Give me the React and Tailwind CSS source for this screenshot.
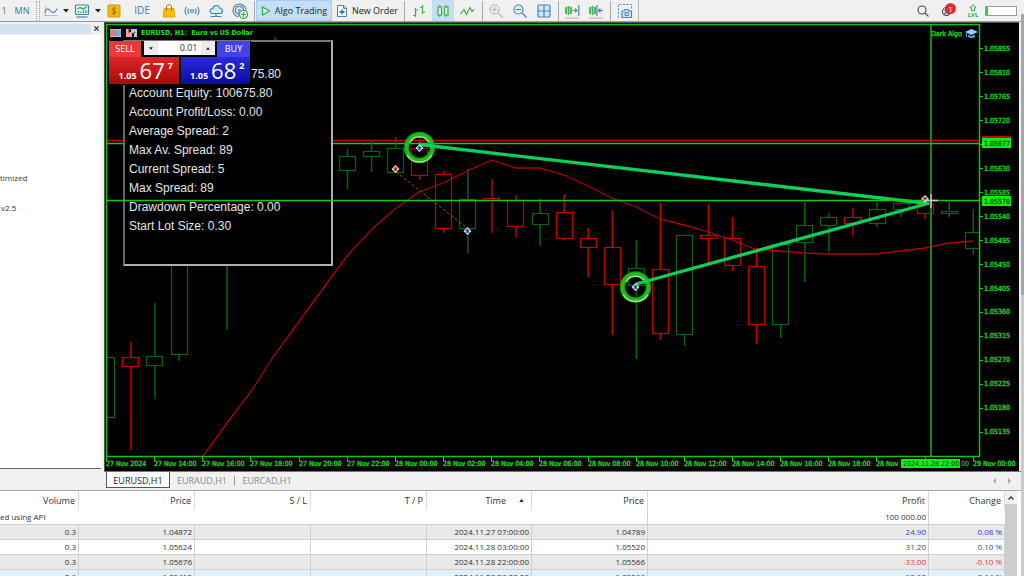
// src/App.jsx
import React from 'react';

const STEP = 24.07;
const FIRST_X = 106.8;

// [slot, direction, high, bodyTop, bodyBottom, low]
const candles = [
    [0, 'up', 357, 357, 417, 417],
    [1, 'down', 342, 357, 366, 450],
    [2, 'up', 303, 356, 365, 399],
    [3, 'up', 240, 240, 354, 361],
    [5, 'up', 200, 200, 210, 330],
    [7, 'up', 37, 50, 60, 70],
    [10, 'up', 149, 156, 170, 189],
    [11, 'up', 140, 151, 156, 172],
    [12, 'up', 137, 148, 172, 173],
    [13, 'down', 137, 148, 175, 180],
    [14, 'down', 171, 174, 228, 233],
    [15, 'up', 169, 199, 228, 253],
    [16, 'down', 179, 198, 200, 233],
    [17, 'down', 195, 200, 226, 238],
    [18, 'up', 199, 213, 224, 246],
    [19, 'down', 194, 212, 238, 240],
    [20, 'down', 228, 238, 247, 277],
    [21, 'down', 210, 247, 284, 335],
    [22, 'up', 240, 268, 285, 359],
    [23, 'down', 203, 269, 333, 340],
    [24, 'up', 235, 235, 334, 346],
    [25, 'down', 204, 235, 238, 263],
    [26, 'down', 217, 238, 265, 271],
    [27, 'down', 251, 266, 324, 344],
    [28, 'up', 241, 244, 324, 338],
    [29, 'up', 202, 225, 242, 282],
    [30, 'up', 213, 217, 225, 252],
    [31, 'down', 208, 217, 223, 236],
    [32, 'up', 202, 209, 223, 227],
    [33, 'up', 201, 203, 209, 217],
    [34, 'down', 200, 204, 213, 219],
    [35, 'up', 202, 211, 213, 217],
    [36, 'up', 209, 232, 248, 255],
];

const movingAverage =
    '203,456 233,415 252,390 273,357 300,320 330,279 347,256 371,230 395,209 419,192 443,183 467,171 492,160 516,168 540,168 564,175 588,186 612,198 636,207 660,219 684,225 708,232 732,240 755,249 780,251 804,253 828,254 876,254 900,251 925,248 949,243 973,241';

// the fifth level sits under the bid price tag
const priceLabels = [
    '1.05855', '1.05810', '1.05765', '1.05720', '', '1.05630', '1.05585', '1.05540', '1.05495',
    '1.05450', '1.05405', '1.05360', '1.05315', '1.05270', '1.05225', '1.05180', '1.05135',
];

// the crosshair time tag covers the 20:00 / 22:00 labels
const timeLabels = [
    '27 Nov 2024', '27 Nov 14:00', '27 Nov 16:00', '27 Nov 18:00', '27 Nov 20:00', '27 Nov 22:00',
    '28 Nov 00:00', '28 Nov 02:00', '28 Nov 04:00', '28 Nov 06:00', '28 Nov 08:00', '28 Nov 10:00',
    '28 Nov 12:00', '28 Nov 14:00', '28 Nov 16:00', '28 Nov 18:00', '28 Nov', '',
    '29 Nov 00:00',
];

const stats = [
    'Account Equity: 100675.80',
    'Account Profit/Loss: 0.00',
    'Average Spread: 2',
    'Max Av. Spread: 89',
    'Current Spread: 5',
    'Max Spread: 89',
    'Drawdown Percentage: 0.00',
    'Start Lot Size: 0.30',
];

const deals = [
    { volume: '0.3', open: '1.04872', time: '2024.11.27 07:00:00', close: '1.04789', profit: '24.90', change: '0.08 %', row: 'bg-[#e9e9e9]' },
    { volume: '0.3', open: '1.05624', time: '2024.11.28 03:00:00', close: '1.05520', profit: '31.20', change: '0.10 %', row: 'bg-white' },
    { volume: '0.3', open: '1.05676', time: '2024.11.28 22:00:00', close: '1.05566', profit: '-33.00', change: '-0.10 %', row: 'bg-[#e9e9e9]' },
    { volume: '0.6', open: '1.05415', time: '2024.11.28 23:00:00', close: '1.05566', profit: '90.60', change: '0.14 %', row: 'bg-[#e0f0fc]' },
];

const Tool = ({ label, className = 'w-6', children }) => (
    <button type="button" aria-label={label} className={`flex h-[21px] shrink-0 items-center justify-center ${className}`}>
        {children}
    </button>
);

const Separator = () => (
    <span className="flex w-1 shrink-0 justify-center">
        <span className="h-5 w-px bg-[#a8a8a8]" />
    </span>
);

const Caret = () => (
    <svg viewBox="0 0 6 4" className="h-1 w-[6px]">
        <path d="M0 0h6L3 3.5z" fill="#222" />
    </svg>
);

const Icon = ({ children, stroke = '#4a83b8' }) => (
    <svg viewBox="0 0 16 16" className="size-4" fill="none" stroke={stroke} strokeWidth="1.2">
        {children}
    </svg>
);

const Toolbar = () => (
    <header className="flex h-[22px] shrink-0 items-center border-b border-[#9a9a9a] bg-[#f0f0f0] text-[9px] text-[#1e1e1e]">
        <Tool label="Weekly" className="w-2 text-[#3d78ad]">1</Tool>
        <Tool label="Monthly" className="w-7 text-[#3d78ad]">MN</Tool>
        <span className="h-5 w-1 shrink-0 border-x border-dotted border-[#a0a0a0]" />
        <Tool label="Chart type" className="w-[22px]">
            <Icon>
                <path d="M2.500 3v10M1 12.500h14" stroke="#b5bcc4" strokeWidth="1" />
                <path d="M1.500 9.500c2.500-5 4-4 6-1.500s4 2 7-2.500" />
            </Icon>
        </Tool>
        <Tool label="Chart type menu" className="w-2"><Caret /></Tool>
        <Tool label="Indicators">
            <Icon>
                <rect x="1.500" y="2" width="13" height="9.500" rx="1" fill="#e3f1fb" />
                <path d="M3.500 6c2-2 3-2 4.500-.5s2.500 0 4.500-2" stroke="#2faa4c" />
                <path d="M4.500 8v2M7 8.500v1.500M9.500 7.500v2.500M12 7v3" stroke="#2faa4c" />
                <path d="M2.500 14h11" />
            </Icon>
        </Tool>
        <Tool label="Indicators menu" className="w-2"><Caret /></Tool>
        <Tool label="Economic calendar">
            <svg viewBox="0 0 16 16" className="size-4">
                <rect x="2" y="2" width="12" height="12" rx="1" fill="#f2b90c" stroke="#d29a08" />
                <path d="M10 5.500c-1-1-4-.8-4 .8s4 1.400 4 3-3 1.800-4 .7M8 4v8" fill="none" stroke="#a06d00" />
            </svg>
        </Tool>
        <Tool label="IDE" className="w-8 text-[10px] text-[#3d78ad]">IDE</Tool>
        <Tool label="Market" className="w-[22px]">
            <svg viewBox="0 0 16 16" className="size-4">
                <path d="M3 5.500h10l1 8.500H2z" fill="#f5bd10" stroke="#d79b00" strokeWidth=".8" />
                <path d="M5.500 8V4c0-3 5-3 5 0v4" fill="none" stroke="#a8740a" />
            </svg>
        </Tool>
        <Tool label="Signals">
            <Icon>
                <circle cx="8" cy="8" r="1.500" />
                <path d="M5 5.500a4 4 0 0 0 0 5M11 5.500a4 4 0 0 1 0 5M2.500 4a7 7 0 0 0 0 8M13.500 4a7 7 0 0 1 0 8" />
            </Icon>
        </Tool>
        <Tool label="Virtual hosting">
            <Icon>
                <path d="M4.500 10.500h7.500a2.500 2.500 0 0 0 0-5C11.500 1.500 5.500 1.500 4.800 5.500a2.500 2.500 0 0 0-.3 5z" fill="#d8ecfb" />
                <path d="M8 10.500v3M2.500 13.500h11" />
            </Icon>
        </Tool>
        <Tool label="VPS">
            <Icon>
                <path d="M14 8A6.500 6.500 0 1 0 6.500 14M11.500 7.500A4 4 0 1 0 6 11M8.500 7.500a1 1 0 1 0-1.500 1L7 13" />
                <circle cx="11.500" cy="11.500" r="4" fill="#f0fff2" stroke="#2faa4c" />
                <path d="M11.500 9v5M9 11.500h5" stroke="#2faa4c" />
            </Icon>
        </Tool>
        <Separator />
        <Tool label="Algo Trading" className="w-[76px] gap-1 border border-[#a9cdec] bg-[#c3def5]">
            <svg viewBox="0 0 10 10" className="size-[10px]">
                <path d="M1.500 1l7 4-7 4z" fill="#eafbea" stroke="#2faa4c" strokeWidth="1.200" />
            </svg>
            Algo Trading
        </Tool>
        <Tool label="New Order" className="w-[70px] gap-1">
            <svg viewBox="0 0 12 14" className="h-[14px] w-3" fill="none" stroke="#4a83b8">
                <path d="M1.500 1.500h6l3 3v8h-9z" fill="#fff" />
                <path d="M7.500 1.500v3h3" />
                <path d="M6 5.500v5M3.500 8h5" stroke="#1f5fa0" strokeWidth="1.300" />
            </svg>
            New Order
        </Tool>
        <Separator />
        <Tool label="Bar chart" className="w-[26px]">
            <Icon stroke="#3fae4e">
                <path d="M4.500 5v9M2 12.500h2.500M4.500 7H7M11.500 2v9M9 4.500h2.500M11.500 9H14" />
            </Icon>
        </Tool>
        <Tool label="Candlesticks" className="w-[22px] bg-[#c3def5]">
            <Icon stroke="#3fae4e">
                <rect x="3" y="4" width="3.500" height="8" fill="#e4f8e4" />
                <rect x="9.500" y="4" width="3.500" height="8" fill="#e4f8e4" />
                <path d="M4.700 2v2M4.700 12v2M11.200 2v2M11.200 12v2" />
            </Icon>
        </Tool>
        <Tool label="Line chart" className="w-[26px]">
            <Icon stroke="#3fae4e">
                <path d="M1.500 11L5 6.500l2.500 5L11 4.500l2 4 2-2" />
            </Icon>
        </Tool>
        <Separator />
        <Tool label="Zoom in">
            <Icon stroke="#b4b4b4">
                <circle cx="6.500" cy="6.500" r="4.500" />
                <path d="M10 10l4.500 4.500M4 6.500h5M6.500 4v5" />
            </Icon>
        </Tool>
        <Tool label="Zoom out">
            <Icon>
                <circle cx="6.500" cy="6.500" r="4.500" fill="#e3f1fb" />
                <path d="M10 10l4.500 4.500M4 6.500h5" />
            </Icon>
        </Tool>
        <Tool label="Tile windows">
            <Icon>
                <rect x="2" y="2" width="12" height="12" rx="1" fill="#cfe6fa" />
                <path d="M8 2v12M2 8h12" />
            </Icon>
        </Tool>
        <Separator />
        <Tool label="Auto scroll">
            <Icon stroke="#3fae4e">
                <path d="M2 4v7M4.500 3v9M7 4v7" strokeWidth="1.800" />
                <path d="M8.500 7.500h4.500M11 5.500l2 2-2 2" />
                <path d="M14.800 2v11" stroke="#4a83b8" />
                <path d="M1 15.200h14" stroke="#bbb" />
            </Icon>
        </Tool>
        <Tool label="Chart shift">
            <Icon stroke="#3fae4e">
                <path d="M2 4v7M4.500 3v9M7 4v7" strokeWidth="1.800" />
                <path d="M9 2v11M15 7.500h-4.500M12.500 5.500l-2 2 2 2" stroke="#4a83b8" />
                <path d="M1 15.200h14" stroke="#bbb" />
            </Icon>
        </Tool>
        <Separator />
        <Tool label="Screenshot" className="w-[26px]">
            <Icon>
                <path d="M1.500 14.500v-13h13v5" strokeDasharray="2 1.500" strokeWidth="1" />
                <path d="M5 8h2l1-1.500h3L12 8h2.500v6.500H5z" fill="#cfe6fa" />
                <circle cx="9.700" cy="11" r="1.700" fill="#fff" />
            </Icon>
        </Tool>
        <span className="h-[21px] w-px bg-[#b8b8b8]" />

        <div className="ml-auto flex items-center">
            <Tool label="Search">
                <svg viewBox="0 0 12 12" className="size-3" fill="none" stroke="#444" strokeWidth="1.100">
                    <circle cx="5" cy="5" r="4" />
                    <path d="M8 8l3.500 3.500" />
                </svg>
            </Tool>
            <Tool label="Notifications" className="relative w-[26px]">
                <svg viewBox="0 0 12 12" className="size-3" fill="none" stroke="#444" strokeWidth="1.100">
                    <circle cx="4.500" cy="6.500" r="4" />
                    <circle cx="4.500" cy="5.500" r="1.500" />
                    <path d="M2 9.500c1-2 4-2 5 0" />
                </svg>
                <span className="absolute top-[3px] right-[5px] size-[11px] rounded-full bg-[#e02f2f] text-center text-[8px] leading-[11px] text-white">1</span>
            </Tool>
            <Tool label="Level" className="w-6 flex-col text-[6px] leading-[6px] font-bold text-[#2faa4c]">
                <svg viewBox="0 0 8 8" className="size-2" fill="none" stroke="#2faa4c">
                    <path d="M4 .7l3 3H5.500v3h-3v-3H1z" />
                </svg>
                LVL
            </Tool>
            <span className="mr-1 h-[10px] w-8 border border-[#9b9b9b] bg-white">
                <span className="block h-full w-[2px] bg-[#3ad03a]" />
            </span>
        </div>
    </header>
);

const Navigator = () => (
    <aside className="flex w-[104px] shrink-0 flex-col pr-[3px] text-[8px] text-[#333]">
        <div className="flex h-[13px] shrink-0 items-center justify-between">
            <div className="h-[10px] grow bg-[#d5e2ef]" />
            <button type="button" aria-label="Close" className="flex w-[10px] justify-center">
                <svg viewBox="0 0 6 6" className="size-[5px]">
                    <path d="M.5.5l5 5M5.500.5l-5 5" stroke="#222" strokeWidth="1.300" />
                </svg>
            </button>
        </div>
        <ul className="grow border-b border-[#666] bg-white pt-[135px] leading-[15px]">
            <li>timized</li>
            <li className="pt-[15px] pl-px">v2.5</li>
        </ul>
        <div className="h-[19px] shrink-0 bg-[#f0f0f0]" />
    </aside>
);

const Candle = ({ slot, dir, high, top, bottom, low }) => {
    const x = FIRST_X + slot * STEP;
    const color = dir === 'up' ? '#0b640b' : '#c40000';
    return (
        <g stroke={color} fill="none">
            <path d={`M${x} ${high}V${top}M${x} ${bottom + 1}V${low}`} strokeWidth="1.500" />
            <rect x={Math.round(x - 8.5) + 0.5} y={top + 0.5} width="16" height={bottom - top} strokeWidth="1.200" />
        </g>
    );
};

const Marker = ({ x, y, color }) => (
    <g>
        <path d={`M${x} ${y - 4}l4 4-4 4-4-4z`} fill="#dfe2e4" />
        <path d={`M${x} ${y - 2.5}l2.500 2.500h-1.200v2h-2.600v-2h-1.200z`} fill={color} />
    </g>
);

const Ring = ({ x, y }) => (
    <g fill="none">
        <circle cx={x} cy={y} r="13" stroke="#118a11" strokeWidth="5.500" />
        <circle cx={x} cy={y} r="13" stroke="#1fbd1a" strokeWidth="3.500" />
        <path d={`M${x - 9.5} ${y - 5}a10.700 10.700 0 0 1 19 0`} stroke="#a3e89a" strokeWidth="1.400" />
        <path d={`M${x - 12.5} ${y + 7.5}a14.600 14.600 0 0 0 25 0`} stroke="#a3e89a" strokeWidth="1.400" />
    </g>
);

const PriceTag = ({ y, children }) => (
    <g>
        <rect x="982" y={y - 5} width="29" height="10" fill="#10f010" />
        <text x="984" y={y + 3} fill="#063806" stroke="#063806" strokeWidth=".2">{children}</text>
    </g>
);

const PriceChart = () => (
    <svg viewBox="105 23 914 448" className="block h-auto w-full text-[7px] [font-family:'DejaVu_Sans_Condensed','DejaVu_Sans',sans-serif]">
        <clipPath id="plot">
            <rect x="107" y="25" width="872" height="431" />
        </clipPath>
        <g clipPath="url(#plot)">
            <path d="M107 140.500H979" stroke="#d00000" strokeWidth="1.500" />
            <path d="M107 143.500H979" stroke="#18c818" strokeWidth="1.300" />
            {candles.map(([slot, dir, high, top, bottom, low]) => (
                <Candle key={slot} slot={slot} dir={dir} high={high} top={top} bottom={bottom} low={low} />
            ))}
            <polyline points={movingAverage} fill="none" stroke="#b00000" strokeWidth="1.300" />
            <path d="M396 172L467 228" stroke="#b8432c" strokeDasharray="3 2" />
        </g>

        <path d="M106.500 24.500H979.500V456.500H106.500z" fill="none" stroke="#16c016" strokeWidth="1.500" />

        <Ring x={419.500} y={147.500} />
        <Ring x={635.500} y={287} />
        <path d="M419 144.500L928 203.500L636 284" fill="none" stroke="#0cd05a" strokeWidth="3.300" strokeLinejoin="round" />
        <Marker x={395.500} y={169} color="#c81e1e" />
        <Marker x={419.500} y={148} color="#2a50a8" />
        <Marker x={467.500} y={231} color="#2a50a8" />
        <Marker x={635.500} y={287} color="#2a50a8" />
        <Marker x={925} y={199} color="#c81e1e" />

        <g fill="#1ee01e" strokeWidth=".35">
            {priceLabels.map((label, i) => (
                <g key={i} stroke="#1ecc1e">
                    <path d={`M980 ${48.5 + i * 24}h3`} strokeWidth="1" />
                    {label && <text x="984" y={51 + Math.round(i * 23.95)}>{label}</text>}
                </g>
            ))}
            {timeLabels.map((label, i) => (
                <g key={i} stroke="#1ecc1e">
                    <path d={`M${106.500 + Math.round(i * 48.15)} 457v4`} strokeWidth="1" />
                    {label && <text x={106 + Math.round(i * 48.15)} y="466">{label}</text>}
                </g>
            ))}
            <text x="961" y="466">00</text>
        </g>

        <rect x="982" y="136" width="29" height="4" fill="#d00000" />
        <PriceTag y={143}>1.05677</PriceTag>
        <PriceTag y={201}>1.05570</PriceTag>
        <rect x="901" y="459" width="59" height="9" fill="#10f010" />
        <text x="903" y="466" fill="#063806">2024.11.28 22:00</text>

        <text x="931" y="36" fill="#1ee01e" stroke="#1ecc1e" strokeWidth=".35">Dark Algo</text>
        <path d="M965 32l6.500-3 6.500 3-6.500 3z" fill="#9cc8f5" />
        <path d="M968 34.500v2.500c2 1.500 5 1.500 7 0v-2.500l-3.500 1.500z" fill="#5b94d6" />
        <path d="M966.500 33v4" stroke="#5b94d6" />
    </svg>
);

const Crosshair = () => (
    <svg viewBox="105 23 914 448" className="pointer-events-none absolute inset-0 size-full" fill="none">
        <path d="M107 200.500H979" stroke="#18c818" strokeWidth="1.300" />
        <path d="M931 25V456" stroke="#12a812" strokeWidth="1.600" />
        <path d="M931 194v14M924 200.500h14" stroke="#c8c8c8" strokeWidth="1.500" />
    </svg>
);

const StatsPanel = () => (
    <div className="absolute top-[17px] left-[18px] h-[226px] w-[210px] border-2 border-t-[#777] border-r-[#b0b0b0] border-b-[#b0b0b0] border-l-[#666] bg-black pt-[23px] pl-1 text-[12px] leading-[19px] text-[#e6e6e6] [font-family:'Liberation_Sans',Arial,sans-serif]">
        <p className="pl-[122px]">75.80</p>
        {stats.map((line) => (
            <p key={line} className="whitespace-nowrap">{line}</p>
        ))}
    </div>
);

const Quote = ({ big, sup, className }) => (
    <button type="button" className={`flex h-[27px] flex-1 items-end justify-center gap-[3px] pb-1 pl-1 text-white ${className}`}>
        <span className="text-[9px] leading-[9px] font-bold">1.05</span>
        <span className="text-[22px] leading-[19px]">{big}</span>
        <span className="self-start pt-1 text-[9px] leading-[9px] font-bold">{sup}</span>
    </button>
);

const OneClickTrading = () => (
    <div className="absolute top-[18px] left-[4px] w-[142px] bg-black pr-px pb-px">
        <div className="flex h-4 justify-between text-[9px] text-white">
            <button type="button" className="w-8 bg-[#e83a3a]">SELL</button>
            <div className="flex h-[14px] w-[71px] bg-white text-[#333]">
                <button type="button" aria-label="Decrease volume" className="flex w-[14px] items-center justify-center bg-[#ececec]">
                    <svg viewBox="0 0 6 4" className="h-[3px] w-1"><path d="M0 0h6L3 4z" fill="#222" /></svg>
                </button>
                <input aria-label="Volume" defaultValue="0.01" className="w-[43px] min-w-0 pr-[3px] text-right text-[9px] outline-none" />
                <button type="button" aria-label="Increase volume" className="flex w-[14px] items-center justify-center bg-[#ececec]">
                    <svg viewBox="0 0 6 4" className="h-[3px] w-1"><path d="M0 4h6L3 0z" fill="#222" /></svg>
                </button>
            </div>
            <button type="button" className="w-[33px] bg-[#4343e6]">BUY</button>
        </div>
        <div className="flex gap-[2px]">
            <Quote big="67" sup="7" className="bg-linear-to-b from-[#dc2626] to-[#a90808]" />
            <Quote big="68" sup="2" className="bg-linear-to-b from-[#2a2ad8] to-[#0a0aa4]" />
        </div>
    </div>
);

const ChartTitle = () => (
    <div className="absolute top-[5px] left-[5px] flex items-center gap-1 text-[7px] leading-[10px] font-bold whitespace-pre text-[#1ee01e] [font-family:'DejaVu_Sans_Condensed','DejaVu_Sans',sans-serif]">
        <svg viewBox="0 0 11 8" className="h-2 w-[11px]">
            <path d="M0 0h5.500v8H0z" fill="#f0b0b0" />
            <path d="M5.500 0H11v8H5.500z" fill="#b0d4f5" />
            <path d="M0 2h5M0 4h5M0 6h5" stroke="#b03030" strokeWidth=".8" />
            <path d="M6 2h5M6 4h5M6 6h5" stroke="#3060b0" strokeWidth=".8" />
        </svg>
        <svg viewBox="0 0 11 8" className="ml-px h-2 w-[11px]">
            <path d="M0 0h3v3h3v5H0z" fill="#f0a0a0" />
            <path d="M5 0h6v8H8V4H5z" fill="#a8ccf0" />
            <path d="M3 0v4M9 3l-2 2" stroke="#c02020" strokeWidth="1.200" />
        </svg>
        <span>EURUSD, H1:  Euro vs US Dollar</span>
    </div>
);

const ChartTabs = () => (
    <nav className="flex h-[17px] items-start border-t border-[#777] bg-[#f0f0f0] text-[9px] leading-[17px] text-[#8a8a8a]">
        <button type="button" className="ml-[2px] h-4 w-[64px] border border-t-0 border-[#555] bg-white text-[#222]">EURUSD,H1</button>
        <button type="button" className="w-[64px]">EURAUD,H1</button>
        <span className="my-1 h-[10px] w-px bg-[#999]" />
        <button type="button" className="w-[64px]">EURCAD,H1</button>
        <div className="ml-auto flex h-[17px] items-center gap-3 pr-[10px]">
            <button type="button" aria-label="Previous tab">
                <svg viewBox="0 0 3 6" className="h-[6px] w-[3px]"><path d="M3 0v6L0 3z" fill="#aaa" /></svg>
            </button>
            <button type="button" aria-label="Next tab">
                <svg viewBox="0 0 3 6" className="h-[6px] w-[3px]"><path d="M0 0v6l3-3z" fill="#aaa" /></svg>
            </button>
        </div>
    </nav>
);

const History = () => (
    <section className="flex min-h-0 flex-1 overflow-hidden border-t border-[#a8a8a8] bg-white pr-1">
        <table className="w-full table-fixed border-separate border-spacing-0 self-start text-right text-[8px] leading-[14px] text-[#333]">
            <colgroup>
                <col className="w-[79px]" />
                <col className="w-[116px]" />
                <col className="w-[116px]" />
                <col className="w-[116px]" />
                <col className="w-[105px]" />
                <col className="w-[116px]" />
                <col />
                <col className="w-[76px]" />
            </colgroup>
            <thead>
                <tr className="h-[19px] text-[9px] [&>th]:border-r [&>th]:border-[#dcdcdc] [&>th]:pr-[3px] [&>th]:font-normal">
                    <th>Volume</th>
                    <th>Price</th>
                    <th>S / L</th>
                    <th>T / P</th>
                    <th>
                        <span className="flex items-center justify-end gap-[13px] pr-1">
                            Time
                            <svg viewBox="0 0 6 4" className="h-[3px] w-[5px]"><path d="M0 4h6L3 0z" fill="#222" /></svg>
                        </span>
                    </th>
                    <th>Price</th>
                    <th>Profit</th>
                    <th>Change</th>
                </tr>
            </thead>
            <tbody className="[&_td]:border-b [&_td]:border-[#cfcfcf] [&_td]:p-0 [&_td]:pr-[2px]">
                <tr className="h-[15px]">
                    <td colSpan={6} className="border-r text-left">ed using API</td>
                    <td className="border-r">100 000.00</td>
                    <td />
                </tr>
                {deals.map((deal) => (
                    <tr key={deal.time} className={`h-[15px] [&>td]:border-r ${deal.row}`}>
                        <td>{deal.volume}</td>
                        <td>{deal.open}</td>
                        <td />
                        <td />
                        <td>{deal.time}</td>
                        <td>{deal.close}</td>
                        <td className={deal.profit.startsWith('-') ? 'text-[#e03c3c]' : 'text-[#3838dc]'}>{deal.profit}</td>
                        <td className={deal.profit.startsWith('-') ? 'text-[#e03c3c]' : 'text-[#3838dc]'}>{deal.change}</td>
                    </tr>
                ))}
            </tbody>
        </table>
        <div className="flex w-3 shrink-0 flex-col bg-[#f0f0f0]">
            <button type="button" aria-label="Scroll up" className="flex h-[13px] items-center justify-center">
                <svg viewBox="0 0 6 4" className="h-1 w-[6px]"><path d="M.5 3.500L3 1l2.500 2.500" fill="none" stroke="#333" strokeWidth="1.300" /></svg>
            </button>
            <div className="flex-1 bg-[#cdcdcd]" />
        </div>
    </section>
);

const App = () => (
    <div className="flex h-screen overflow-hidden bg-[#f0f0f0] [font-family:'Open_Sans','Noto_Sans',sans-serif]">
        <div className="flex min-w-0 flex-1 flex-col">
            <Toolbar />
            <main className="flex shrink-0">
                <Navigator />
                <section className="min-w-0 flex-1">
                    <div className="relative mr-[2px] border-t border-l border-[#555] bg-black">
                        <PriceChart />
                        <StatsPanel />
                        <OneClickTrading />
                        <ChartTitle />
                        <Crosshair />
                    </div>
                    <ChartTabs />
                </section>
            </main>
            <div className="h-[2px] shrink-0" />
            <History />
        </div>
        <div className="flex w-[3px] shrink-0 flex-col pt-[14px]">
            <div className="flex-1 bg-[#a6a6a6]" />
            <div className="flex-1 bg-[#cbcbcb]" />
        </div>
    </div>
);

export default App;
